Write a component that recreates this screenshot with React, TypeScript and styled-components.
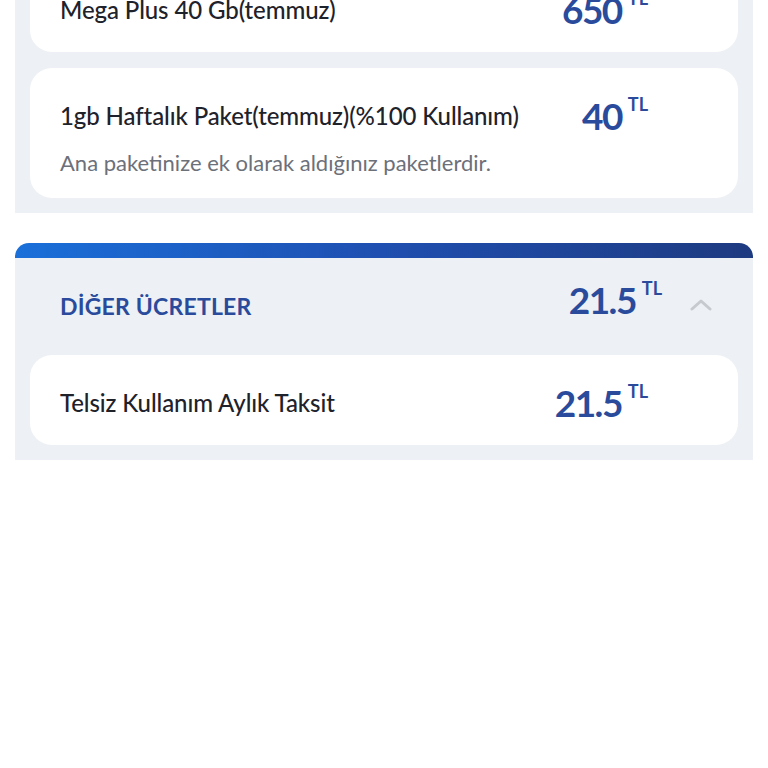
import React from "react";
import styled, { createGlobalStyle } from "styled-components";

const GlobalStyle = createGlobalStyle`
  html, body {
    margin: 0;
    padding: 0;
    background: #ffffff;
    font-family: "Lato", "Noto Sans", sans-serif;
    overflow: hidden;
  }
`;

const Page = styled.div`
  width: 768px;
  height: 768px;
  overflow: hidden;
  background: #ffffff;
`;

const Panel = styled.section<{ $first?: boolean }>`
  margin: ${(p) => (p.$first ? "-38px 15px 0" : "0 15px")};
  background: #edf0f4;
  padding: 0 15px 15px;
  display: flex;
  flex-direction: column;
  gap: 16px;
`;

const Group = styled.div`
  margin-top: 30px;
`;

const TopBar = styled.div`
  margin: 0 15px;
  height: 15px;
  border-radius: 14px 14px 0 0;
  background: linear-gradient(90deg, #1a6fd9 0%, #1f4fb0 50%, #1e3a80 100%);
`;

const Header = styled.div`
  height: 97px;
  display: flex;
  align-items: center;
  padding: 0 26px 0 30px;
  margin-bottom: -16px;
`;

const HeaderTitle = styled.h2`
  flex: 1;
  margin: 0;
  color: #2a4b9c;
  font-size: 23px;
  font-weight: 700;
  letter-spacing: 0.2px;
  margin-top: -2px;
`;

const HeaderPrice = styled.div`
  margin-bottom: 14px;
`;

const Chevron = styled.svg`
  width: 22px;
  height: 13px;
  margin-left: 28px;
  margin-bottom: 4px;
`;

const Card = styled.div<{ $tall?: boolean }>`
  background: #ffffff;
  border-radius: 22px;
  padding: 0 90px 0 30px;
  height: ${(p) => (p.$tall ? "130px" : "90px")};
  display: flex;
  flex-direction: column;
  box-sizing: border-box;
`;

const Row = styled.div`
  height: 94px;
  display: flex;
  align-items: center;
  justify-content: space-between;
  margin-bottom: -30px;
`;

const ItemTitle = styled.div`
  color: #1e222b;
  font-size: 24px;
  font-weight: 500;
  letter-spacing: -0.1px;
`;

const ItemNote = styled.div`
  color: #6c7079;
  font-size: 22px;
  font-weight: 400;
  line-height: 50px;
  margin-top: 6px;
`;

const Price = styled.div`
  display: flex;
  align-items: flex-start;
  color: #2a4b9c;
  font-weight: 700;
`;

const Amount = styled.span`
  font-size: 37px;
  line-height: 37px;
  letter-spacing: -1.5px;
`;

const Currency = styled.span`
  font-size: 18px;
  line-height: 18px;
  margin-left: 6px;
  margin-top: -2px;
`;

const Money = ({ value }: { value: string }) => (
  <Price>
    <Amount>{value}</Amount>
    <Currency>TL</Currency>
  </Price>
);

export default function App() {
  return (
    <Page>
      <GlobalStyle />
      <Panel $first>
        <Card>
          <Row>
            <ItemTitle>Mega Plus 40 Gb(temmuz)</ItemTitle>
            <Money value="650" />
          </Row>
        </Card>
        <Card $tall>
          <Row>
            <ItemTitle>1gb Haftalık Paket(temmuz)(%100 Kullanım)</ItemTitle>
            <Money value="40" />
          </Row>
          <ItemNote>Ana paketinize ek olarak aldığınız paketlerdir.</ItemNote>
        </Card>
      </Panel>

      <Group>
        <TopBar />
        <Panel>
          <Header>
            <HeaderTitle>DİĞER ÜCRETLER</HeaderTitle>
            <HeaderPrice>
              <Money value="21.5" />
            </HeaderPrice>
            <Chevron viewBox="0 0 22 13">
              <path
                d="M2 11 L11 3 L20 11"
                fill="none"
                stroke="#c6c9ce"
                strokeWidth="3"
                strokeLinecap="round"
                strokeLinejoin="round"
              />
            </Chevron>
          </Header>
          <Card>
            <Row>
              <ItemTitle>Telsiz Kullanım Aylık Taksit</ItemTitle>
              <Money value="21.5" />
            </Row>
          </Card>
        </Panel>
      </Group>
    </Page>
  );
}
